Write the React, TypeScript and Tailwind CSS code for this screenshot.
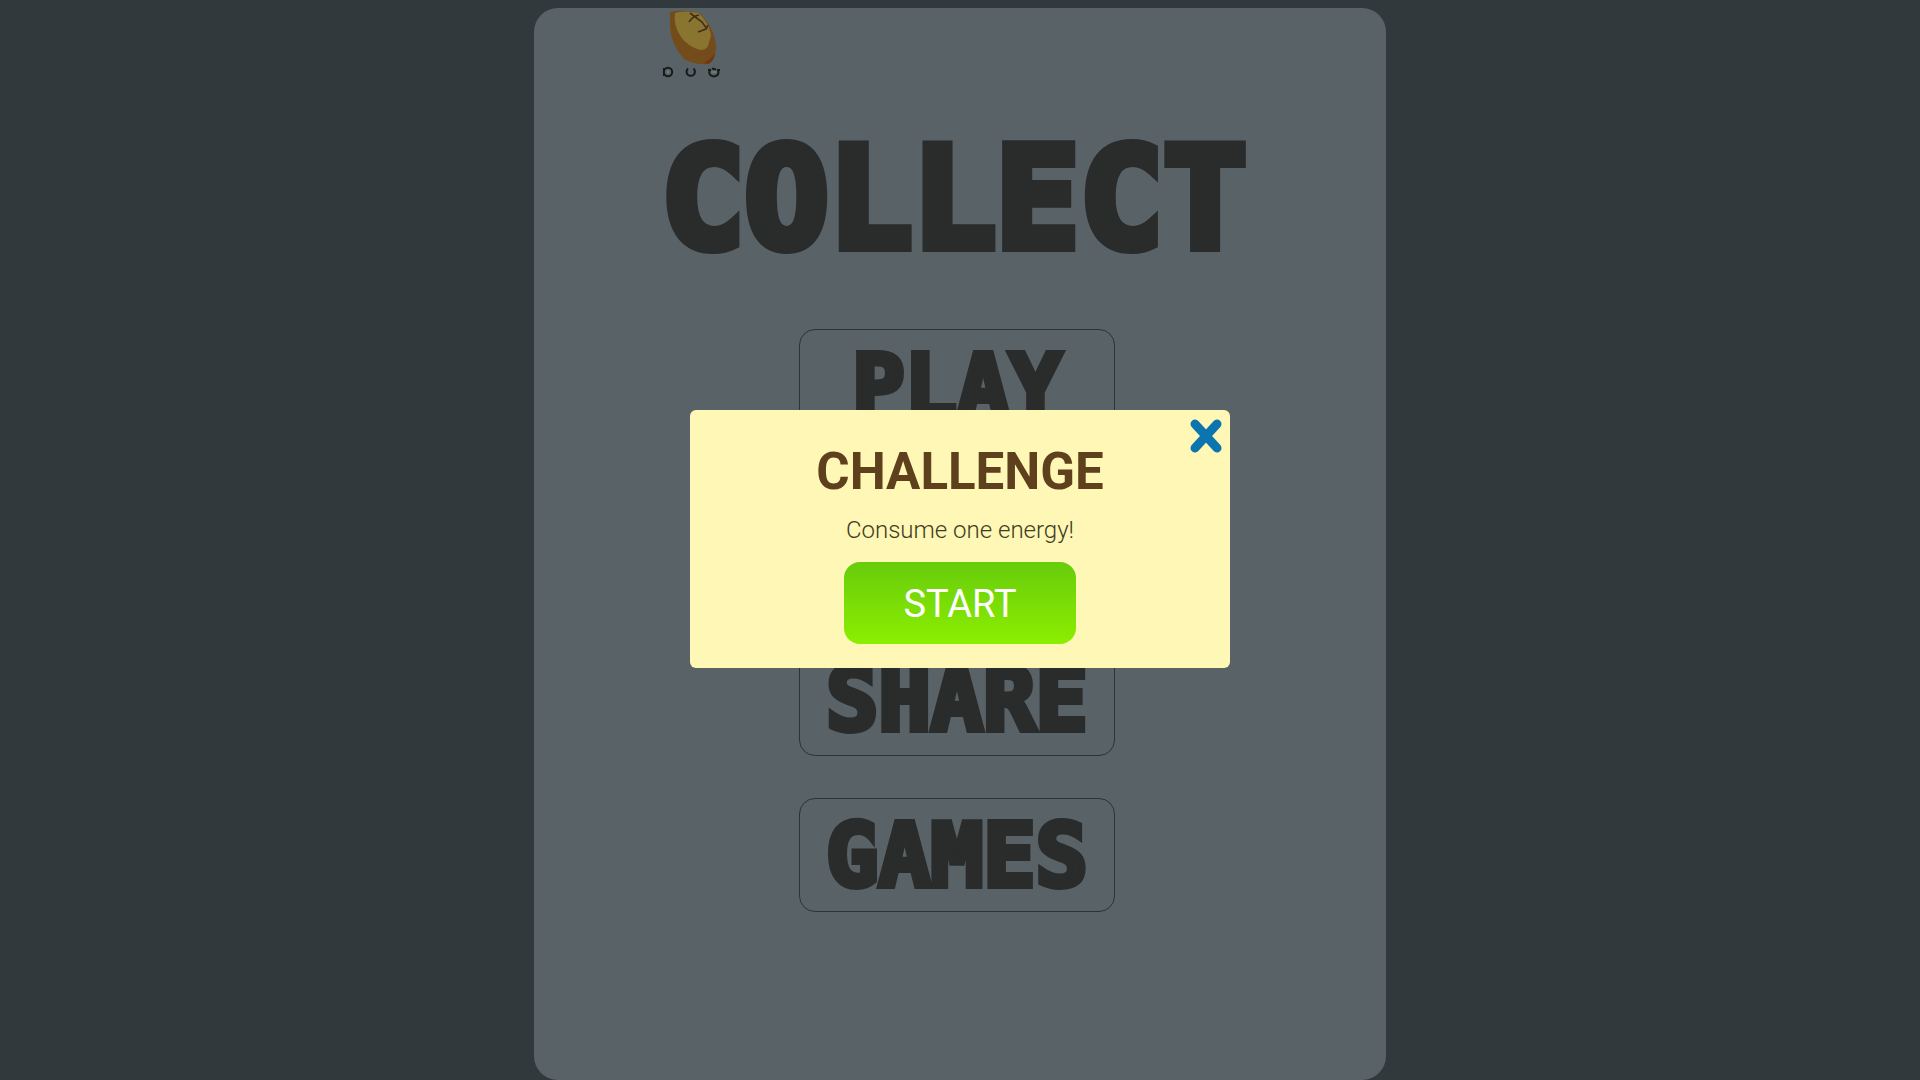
import React from 'react';

interface MenuButtonProps {
  label: string;
  className?: string;
}

const MenuButton: React.FC<MenuButtonProps> = ({ label, className = '' }) => (
  <button
    type="button"
    className={`flex h-[114px] w-[316px] items-center justify-center rounded-2xl border border-[#2c3337] pt-0.5 font-['DejaVu_Sans_Mono','Liberation_Mono',monospace] text-[87px] leading-none font-bold text-[#2a2b2b] [-webkit-text-stroke:6px_#2a2b2b] ${className}`}
  >
    {label}
  </button>
);

const EnergyBadge: React.FC = () => (
  <svg viewBox="0 0 60 70" className="h-[70px] w-[60px]" aria-hidden="true">
    <path d="M8 2 Q20 -1 38 3 Q54 21 54 38 Q53 51 46 54 Q31 55 22 49 Q8 33 8 15Z" fill="#744b1b" />
    <path d="M13 3 Q22 0 37 3 Q47 13 49 25 Q47 33 46 36 Q44 40 38 40 Q25 36 19 27 Q11 15 13 3Z" fill="#89752f" />
    <path d="M42 53 Q50 48 53 43 Q52 52 46 54Z" fill="#713712" />
    <path
      d="M27 12 Q31 6 37 5 M28 3 L40 12 L45 19 M36 22 L44 19 L46 15"
      fill="none"
      stroke="#40301b"
      strokeWidth="1.6"
    />
    <g fill="none" stroke="#161b1c" strokeWidth="2">
      <circle cx="6" cy="62" r="4.2" />
      <path d="M2 58v8" />
      <path d="M26 58.5a4.2 4.2 0 1 0 5.5 0" />
      <path d="M48.5 59Q45 65 51.500 66.500Q58 66 56 60M46 60h3M55 60h3M50 58.5l4 1" />
    </g>
    <circle cx="6" cy="62" r="1.2" fill="#7c8468" />
    <path d="M49.5 62h5" stroke="#7c8468" strokeWidth="1.4" />
  </svg>
);

const ChallengeDialog: React.FC = () => (
  <div className="fixed inset-0 flex items-center justify-center pb-0.5">
    <section
      role="dialog"
      aria-labelledby="challenge-title"
      className="relative flex w-[540px] flex-col items-center rounded-md bg-[#fef7b5] px-6 pt-8 pb-6 font-[Roboto,sans-serif]"
    >
      <button type="button" aria-label="Close" className="absolute top-2 right-2 h-9 w-8">
        <svg viewBox="0 0 32 36" className="h-full w-full" aria-hidden="true">
          <path
            d="M5 6L27 30M27 6L5 30"
            stroke="#0b75b0"
            strokeWidth="9"
            strokeLinecap="round"
          />
        </svg>
      </button>
      <h2 id="challenge-title" className="text-[51px] leading-[60px] font-bold text-[#5e411c]">
        CHALLENGE
      </h2>
      <p className="mt-3 text-[24px] leading-8 font-light text-[#3f3c22]">Consume one energy!</p>
      <button
        type="button"
        className="mt-4 h-[82px] w-[232px] rounded-2xl bg-linear-to-b from-[#67cc0b] to-[#8cee00] pt-0.5 text-[38px] leading-none text-white"
      >
        START
      </button>
    </section>
  </div>
);

export default function App() {
  return (
    <div className="flex min-h-screen flex-col bg-[#32393d] pt-2">
      <main className="mx-auto flex w-full max-w-[852px] flex-1 flex-col rounded-3xl bg-[#596267]">
        <header className="pt-0.5 pl-32">
          <EnergyBadge />
        </header>
        <h1 className="mt-[62px] pr-3 text-center font-['DejaVu_Sans_Mono','Liberation_Mono',monospace] text-[139px] leading-[114px] font-bold text-[#2a2b2b] [-webkit-text-stroke:10px_#2a2b2b]">
          COLLECT
        </h1>
        <nav className="mt-[73px] flex flex-col items-center pr-1.5 pb-10">
          <MenuButton label="PLAY" />
          <MenuButton label="SHARE" className="mt-[199px]" />
          <MenuButton label="GAMES" className="mt-[42px]" />
        </nav>
      </main>
      <ChallengeDialog />
    </div>
  );
}
